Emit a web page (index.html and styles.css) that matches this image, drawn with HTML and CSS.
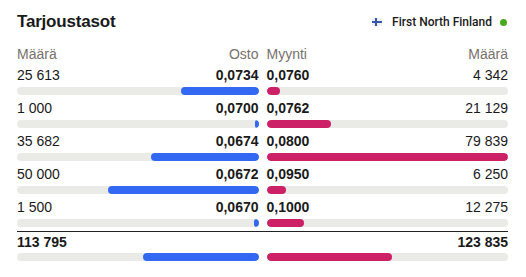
FILE: index.html
```html
<!DOCTYPE html>
<html lang="fi">
<head>
<meta charset="utf-8">
<link rel="stylesheet" href="styles.css">
</head>
<body>
<div class="panel">
  <div class="top">
    <h2 class="title">Tarjoustasot</h2>
    <div class="market">
      <svg class="flag" width="10" height="8" viewBox="0 0 10 8"><rect width="10" height="8" fill="#eef0f4"/><rect x="0" y="3" width="10" height="2" fill="#3556a8"/><rect x="3" y="0" width="2" height="8" fill="#3556a8"/></svg>
      <span class="market-name">First North Finland</span>
      <span class="dot"></span>
    </div>
  </div>
  <div class="book">
    <div class="side bid">
      <div class="line head"><span>Määrä</span><span>Osto</span></div>
      <div class="line"><span>25 613</span><b>0,0734</b></div>
      <div class="track"><div class="fill" style="width:77.6px"></div></div>
      <div class="line"><span>1 000</span><b>0,0700</b></div>
      <div class="track"><div class="fill" style="width:4px"></div></div>
      <div class="line"><span>35 682</span><b>0,0674</b></div>
      <div class="track"><div class="fill" style="width:107.5px"></div></div>
      <div class="line"><span>50 000</span><b>0,0672</b></div>
      <div class="track"><div class="fill" style="width:151px"></div></div>
      <div class="line"><span>1 500</span><b>0,0670</b></div>
      <div class="track"><div class="fill" style="width:4.5px"></div></div>
    </div>
    <div class="side ask">
      <div class="line head"><span>Myynti</span><span>Määrä</span></div>
      <div class="line"><b>0,0760</b><span>4 342</span></div>
      <div class="track"><div class="fill" style="width:13px"></div></div>
      <div class="line"><b>0,0762</b><span>21 129</span></div>
      <div class="track"><div class="fill" style="width:64px"></div></div>
      <div class="line"><b>0,0800</b><span>79 839</span></div>
      <div class="track"><div class="fill" style="width:100%"></div></div>
      <div class="line"><b>0,0950</b><span>6 250</span></div>
      <div class="track"><div class="fill" style="width:19px"></div></div>
      <div class="line"><b>0,1000</b><span>12 275</span></div>
      <div class="track"><div class="fill" style="width:37px"></div></div>
    </div>
  </div>
  <div class="totals">
    <div class="side bid">
      <div class="line"><b>113 795</b></div>
      <div class="track"><div class="fill" style="width:116px"></div></div>
    </div>
    <div class="side ask">
      <div class="line end"><b>123 835</b></div>
      <div class="track"><div class="fill" style="width:125px"></div></div>
    </div>
  </div>
</div>
</body>
</html>
```

FILE: styles.css
```css
* { box-sizing: border-box; }
body {
  margin: 0;
  background: #fff;
  font-family: "Liberation Sans", Arial, sans-serif;
  color: #1a1a1a;
}
.panel {
  width: 526px;
  padding: 12px 18px 0 17px;
}
.top {
  display: flex;
  justify-content: space-between;
  align-items: center;
  height: 20px;
}
.title {
  margin: 0;
  font-size: 17px;
  line-height: 20px;
  font-weight: 700;
  letter-spacing: -0.2px;
}
.market {
  display: flex;
  align-items: center;
  font-family: Roboto, "Liberation Sans", sans-serif;
  font-size: 12px;
  font-weight: 500;
  color: #1a1a1a;
}
.flag { margin-right: 10px; }
.dot {
  width: 7px;
  height: 7px;
  border-radius: 50%;
  background: #4aa81c;
  margin-left: 8px;
  margin-right: 1px;
}
.book, .totals {
  display: grid;
  grid-template-columns: 1fr 1fr;
  column-gap: 8px;
}
.book { margin-top: 14px; }
.line {
  display: flex;
  justify-content: space-between;
  font-size: 14px;
  line-height: 16px;
  height: 16px;
}
.line b { font-weight: 700; }
.line.head {
  color: #77716c;
  margin-bottom: 5px;
}
.line.end { justify-content: flex-end; }
.track {
  height: 8px;
  border-radius: 4px;
  background: #eaeae6;
  margin-top: 4px;
  margin-bottom: 5px;
  display: flex;
  overflow: hidden;
}
.bid .track { justify-content: flex-end; }
.fill {
  height: 100%;
  border-radius: 4px;
}
.bid .fill { background: #3369f2; }
.ask .fill { background: #cc2167; }
.totals {
  border-top: 1.5px solid #222;
  margin-top: -1px;
  padding-top: 2px;
}
.totals .track { margin-top: 3px; }
```
